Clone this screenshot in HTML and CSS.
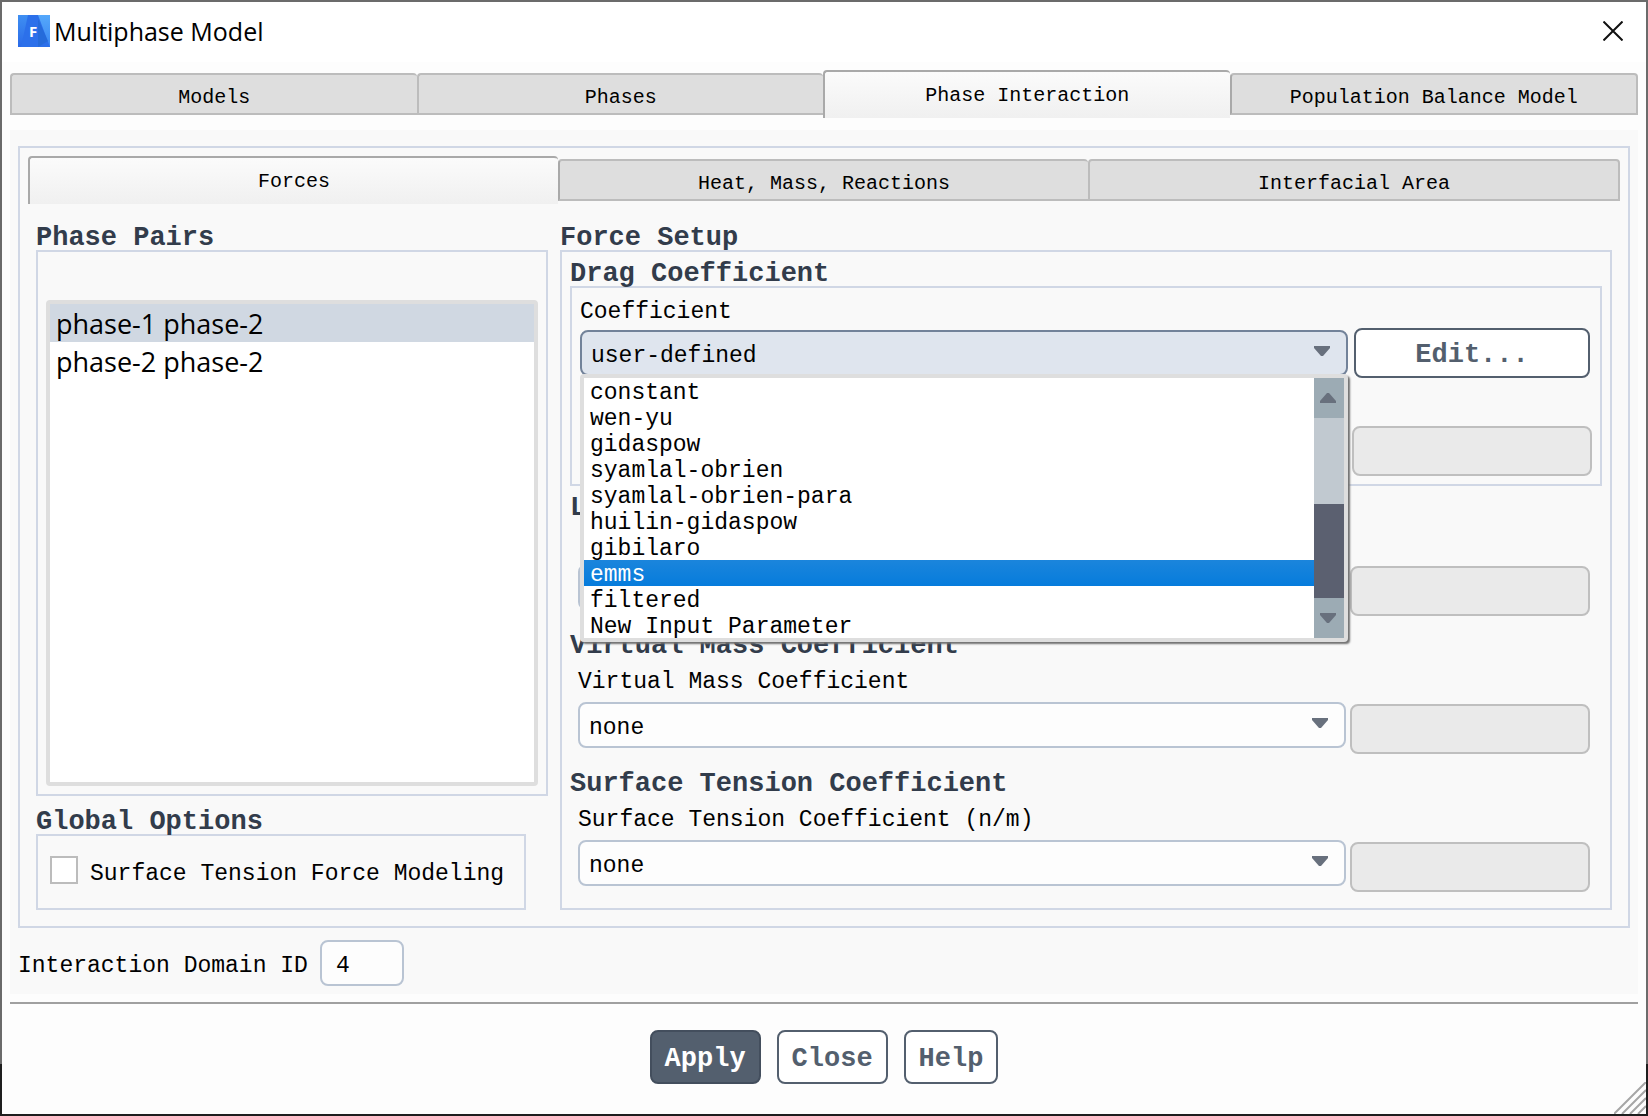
FILE: index.html
```html
<!DOCTYPE html>
<html lang="en">
<head>
<meta charset="utf-8">
<title>Multiphase Model</title>
<link rel="stylesheet" href="styles.css">
</head>
<body>
<div class="dialog" role="dialog" aria-labelledby="dialog-title">
  <header class="titlebar">
    <svg class="app-icon" viewBox="0 0 32 32" aria-hidden="true">
      <defs>
        <linearGradient id="icon-left" x1="0" y1="0" x2="0" y2="1"><stop offset="0" stop-color="#3f8ff2"/><stop offset="1" stop-color="#2a6ae8"/></linearGradient>
        <linearGradient id="icon-right" x1="0" y1="0" x2="0" y2="1"><stop offset="0" stop-color="#55a8fb"/><stop offset="1" stop-color="#3a86f2"/></linearGradient>
      </defs>
      <rect width="32" height="32" fill="url(#icon-left)"/>
      <path d="M10 0H21L32 32H3Z" fill="#2c70ea"/>
      <path d="M20 0H32V32Z" fill="url(#icon-right)"/>
      <path d="M20 4L30 26L20 32Z" fill="#2267cf" opacity=".6"/>
      <text class="app-letter" x="15" y="22" text-anchor="middle">F</text>
    </svg>
    <h1 class="title" id="dialog-title">Multiphase Model</h1>
    <button class="close" type="button" aria-label="Close window">
      <svg viewBox="0 0 20 20" aria-hidden="true"><path d="M0.5 0.5L19.5 19.5M19.5 0.5L0.5 19.5"/></svg>
    </button>
  </header>

  <nav class="tabs outer-tabs" role="tablist">
    <button class="tab" type="button" role="tab">Models</button>
    <button class="tab" type="button" role="tab">Phases</button>
    <button class="tab active" type="button" role="tab" aria-selected="true">Phase Interaction</button>
    <button class="tab" type="button" role="tab">Population Balance Model</button>
  </nav>

  <main class="panel">
    <div class="frame main-frame">
      <nav class="tabs" role="tablist">
        <button class="tab active" type="button" role="tab" aria-selected="true">Forces</button>
        <button class="tab" type="button" role="tab">Heat, Mass, Reactions</button>
        <button class="tab" type="button" role="tab">Interfacial Area</button>
      </nav>

      <div class="columns">
        <div class="left">
          <section class="pairs">
            <h2 class="heading">Phase Pairs</h2>
            <div class="frame pairs-frame">
              <ul class="list" role="listbox" aria-label="Phase Pairs">
                <li class="pair selected" role="option" aria-selected="true">phase-1 phase-2</li>
                <li class="pair" role="option">phase-2 phase-2</li>
              </ul>
            </div>
          </section>
          <section class="options">
            <h2 class="heading">Global Options</h2>
            <div class="frame options-frame">
              <input class="check" type="checkbox" id="tension-model">
              <label class="check-label" for="tension-model">Surface Tension Force Modeling</label>
            </div>
          </section>
        </div>

        <section class="right">
          <h2 class="heading">Force Setup</h2>
          <div class="frame force-frame">
            <section class="drag">
              <h3 class="heading">Drag Coefficient</h3>
              <div class="frame drag-frame">
                <label class="label" for="drag">Coefficient</label>
                <div class="row drag-row">
                  <div class="combo open">
                    <select class="select" id="drag"><option>user-defined</option></select>
                    <svg class="arrow" viewBox="0 0 16 10" aria-hidden="true"><path d="M0 0H16V2L9 10H7L0 2Z"/></svg>
                    <div class="popup">
                      <ul class="menu" role="listbox" aria-label="Coefficient">
                        <li class="item" role="option">constant</li>
                        <li class="item" role="option">wen-yu</li>
                        <li class="item" role="option">gidaspow</li>
                        <li class="item" role="option">syamlal-obrien</li>
                        <li class="item" role="option">syamlal-obrien-para</li>
                        <li class="item" role="option">huilin-gidaspow</li>
                        <li class="item" role="option">gibilaro</li>
                        <li class="item current" role="option" aria-selected="true">emms</li>
                        <li class="item" role="option">filtered</li>
                        <li class="item" role="option">New Input Parameter</li>
                      </ul>
                      <div class="scrollbar">
                        <button class="scroll-button" type="button" aria-label="Scroll up"><svg viewBox="0 0 16 10" aria-hidden="true"><path d="M0 10H16V8L9 0H7L0 8Z"/></svg></button>
                        <div class="track"><div class="thumb"></div></div>
                        <button class="scroll-button" type="button" aria-label="Scroll down"><svg viewBox="0 0 16 10" aria-hidden="true"><path d="M0 0H16V2L9 10H7L0 2Z"/></svg></button>
                      </div>
                    </div>
                  </div>
                  <button class="button edit" type="button">Edit...</button>
                </div>
                <button class="value drag-value" type="button" disabled aria-label="Drag value"></button>
              </div>
            </section>

            <section class="group">
              <h3 class="heading">Lift Coefficient</h3>
              <div class="fields">
                <label class="label" for="lift">Lift Coefficient</label>
                <div class="row">
                  <div class="combo">
                    <select class="select" id="lift"><option>none</option></select>
                    <svg class="arrow" viewBox="0 0 16 10" aria-hidden="true"><path d="M0 0H16V2L9 10H7L0 2Z"/></svg>
                  </div>
                  <button class="value" type="button" disabled aria-label="Lift value"></button>
                </div>
              </div>
            </section>

            <section class="group">
              <h3 class="heading">Virtual Mass Coefficient</h3>
              <div class="fields">
                <label class="label" for="mass">Virtual Mass Coefficient</label>
                <div class="row">
                  <div class="combo">
                    <select class="select" id="mass"><option>none</option></select>
                    <svg class="arrow" viewBox="0 0 16 10" aria-hidden="true"><path d="M0 0H16V2L9 10H7L0 2Z"/></svg>
                  </div>
                  <button class="value" type="button" disabled aria-label="Virtual mass value"></button>
                </div>
              </div>
            </section>

            <section class="group">
              <h3 class="heading">Surface Tension Coefficient</h3>
              <div class="fields">
                <label class="label" for="tension">Surface Tension Coefficient (n/m)</label>
                <div class="row">
                  <div class="combo">
                    <select class="select" id="tension"><option>none</option></select>
                    <svg class="arrow" viewBox="0 0 16 10" aria-hidden="true"><path d="M0 0H16V2L9 10H7L0 2Z"/></svg>
                  </div>
                  <button class="value" type="button" disabled aria-label="Surface tension value"></button>
                </div>
              </div>
            </section>
          </div>
        </section>
      </div>
    </div>

    <div class="domain">
      <label class="label" for="domain-id">Interaction Domain ID</label>
      <input class="domain-input" id="domain-id" type="text" value="4">
    </div>
  </main>

  <footer class="footer">
    <button class="button primary" type="button">Apply</button>
    <button class="button" type="button">Close</button>
    <button class="button" type="button">Help</button>
  </footer>
  <svg class="grip" viewBox="0 0 32 32" aria-hidden="true"><path d="M0 32L32 0M8 32L32 8M16 32L32 16M24 32L32 24"/></svg>
</div>
</body>
</html>
```
FILE: styles.css
```css
* {
  box-sizing: border-box;
}

body {
  margin: 0;
  min-height: 100vh;
  padding: 2px;
  display: flex;
  background: linear-gradient(#6b6b6b calc(100% - 52px), #1e1e1e calc(100% - 52px));
  color: #000;
  font: 23px/28px "Liberation Mono", monospace;
}

button,
input,
select {
  margin: 0;
  font: inherit;
  color: inherit;
}

h1,
h2,
h3,
ul {
  margin: 0;
  padding: 0;
  list-style: none;
}

.dialog {
  position: relative;
  flex: 1;
  min-width: 0;
  display: flex;
  flex-direction: column;
  background: #fdfdfd;
}

/* Title bar */
.titlebar {
  height: 60px;
  padding: 0 23px 2px 16px;
  display: flex;
  align-items: center;
  gap: 4px;
  background: #fff;
}

.app-icon {
  width: 32px;
  height: 32px;
}

.app-letter {
  font: bold 15px "Open Sans", sans-serif;
  fill: #fff;
}

.title {
  flex: 1;
  font: 25px/34px "Open Sans", sans-serif;
}

.close {
  width: 20px;
  height: 20px;
  padding: 0;
  border: 0;
  background: none;
}

.close svg {
  display: block;
  fill: none;
  stroke: #111;
  stroke-width: 2;
}

/* Tabs */
.tabs {
  height: 48px;
  display: flex;
  align-items: center;
}

.outer-tabs {
  margin: 8px 8px 12px;
}

.tab {
  flex: 1 1 0;
  height: 42px;
  padding: 8px 0 0;
  border: 2px solid #bcbcbc;
  border-right-width: 0;
  border-radius: 4px 4px 0 0;
  background: #dedede;
  font-size: 20px;
  line-height: 24px;
}

.tab:last-child {
  border-right-width: 2px;
}

.tab.active {
  height: 48px;
  padding-top: 2px;
  border-color: #a9a9a9;
  border-bottom: 0;
  background: linear-gradient(#fbfbfb, #f0f0f0);
}

.tab.active + .tab {
  border-left-color: #a9a9a9;
}

/* Frames and headings */
.panel {
  flex: 1;
  margin: 0 8px;
  padding: 16px 8px 8px;
  display: flex;
  flex-direction: column;
  background: #f9f9f9;
}

.frame {
  border: 2px solid #d0d7e5;
}

.heading {
  color: #323c4b;
  font-size: 27px;
  font-weight: bold;
  line-height: 24px;
  white-space: nowrap;
}

.main-frame {
  flex: 1;
  padding: 8px 8px 16px;
  display: flex;
  flex-direction: column;
  gap: 22px;
}

.columns {
  flex: 1;
  padding: 0 8px;
  display: grid;
  grid-template-columns: 512px minmax(0, 1fr);
  gap: 12px;
}

.left,
.right,
.pairs {
  display: flex;
  flex-direction: column;
}

.left {
  gap: 14px;
}

.pairs,
.pairs-frame,
.force-frame {
  flex: 1;
}

.pairs-frame {
  padding: 48px 8px 8px;
  display: flex;
}

.list {
  flex: 1;
  border: 4px solid #dedede;
  border-radius: 4px;
  background: #fff;
}

.pair {
  padding: 2px 6px 0;
  font: 27px/36px "Open Sans", sans-serif;
}

.pair.selected {
  background: #d0d8e2;
}

.options-frame {
  width: 490px;
  padding: 20px 12px 16px;
  display: flex;
  gap: 12px;
}

.check {
  appearance: none;
  flex: none;
  width: 28px;
  height: 28px;
  border: 2px solid #bcbcbc;
  background: #fff;
}

.check-label {
  line-height: 36px;
  white-space: nowrap;
}

/* Force setup */
.force-frame {
  padding: 10px 8px 16px;
}

.drag {
  margin-bottom: 10px;
}

.drag-frame {
  padding: 10px 8px 8px;
  display: flex;
  flex-direction: column;
}

.group + .group {
  margin-top: 18px;
}

.fields {
  padding: 10px 12px 0 8px;
}

.label {
  display: block;
  white-space: nowrap;
}

.row {
  margin-top: 6px;
  display: grid;
  grid-template-columns: minmax(0, 1fr) 240px;
  gap: 4px;
  align-items: start;
}

.fields .value {
  margin-top: 2px;
}

.drag-row {
  margin-top: 2px;
  align-items: center;
}

.combo {
  position: relative;
}

.select {
  appearance: none;
  display: block;
  width: 100%;
  height: 46px;
  padding: 6px 40px 0 9px;
  border: 2px solid #b9c4d3;
  border-radius: 8px;
  background: #fdfdfd;
}

.open .select {
  border-color: #728299;
  background: #dfe5ee;
}

.arrow {
  position: absolute;
  top: 16px;
  right: 18px;
  width: 16px;
  height: 10px;
  fill: #68707d;
}

.value {
  height: 50px;
  border: 2px solid #bfbfbf;
  border-radius: 8px;
  background: #eaeaea;
}

.drag-value {
  width: 240px;
  margin-top: 48px;
  align-self: flex-end;
}

/* Open list of the drag combo */
.popup {
  position: absolute;
  z-index: 1;
  top: 44px;
  left: 0;
  right: 0;
  display: flex;
  border: 4px solid #dedede;
  border-radius: 4px;
  background: #fff;
  box-shadow: 2px 2px 2px #707070;
}

.menu {
  flex: 1;
}

.item {
  height: 26px;
  padding: 4px 6px 0;
  line-height: 22px;
}

.item.current {
  background: linear-gradient(#1b85dc, #067cdc);
  color: #fff;
}

.scrollbar {
  width: 30px;
  display: flex;
  flex-direction: column;
}

.scroll-button {
  height: 40px;
  padding: 0 2px 0 0;
  border: 0;
  display: grid;
  place-items: center;
  background: #9cabb4;
}

.scroll-button svg {
  width: 16px;
  height: 10px;
  fill: #68707d;
}

.track {
  flex: 1;
  display: flex;
  flex-direction: column;
  justify-content: flex-end;
  background: #c1c9d0;
}

.thumb {
  height: 94px;
  background: #5b6070;
}

/* Bottom of the dialog */
.domain {
  margin-top: 12px;
  display: grid;
  grid-template-columns: 302px 84px;
  align-items: baseline;
}

.domain-input {
  width: 84px;
  height: 46px;
  padding: 6px 14px 0;
  border: 2px solid #b9c4d3;
  border-radius: 8px;
  background: #fdfdfd;
}

.footer {
  margin: 8px 8px 0;
  padding: 26px 0 30px;
  border-top: 2px solid #a0a0a0;
  display: flex;
  justify-content: center;
  gap: 16px;
}

.button {
  height: 54px;
  padding: 4px 13px 0;
  border: 2px solid #535f6e;
  border-radius: 8px;
  background: #fff;
  color: #535f6e;
  font-size: 27px;
  font-weight: bold;
}

.button.edit {
  height: 50px;
  margin: 0 2px;
}

.button.primary {
  border-color: #434e5d;
  background: #535f6e;
  color: #fff;
}

.grip {
  position: absolute;
  right: 0;
  bottom: 0;
  width: 32px;
  height: 32px;
  fill: none;
  stroke: #a6a6a6;
  stroke-width: 2;
}
```
